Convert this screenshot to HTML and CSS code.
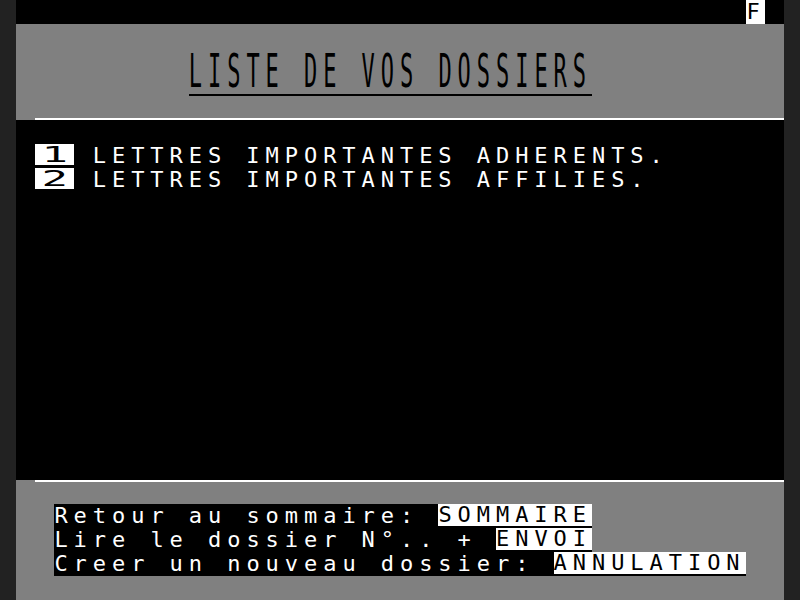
FILE: index.html
```html
<!DOCTYPE html>
<html lang="fr">
<head>
<meta charset="utf-8">
<title>Liste de vos dossiers</title>
<link rel="stylesheet" href="styles.css">
</head>
<body>
<div class="screen">
  <div class="status"><span class="status-f">F</span></div>
  <div class="header">
    <div class="title"><div class="title-text">LISTE DE VOS DOSSIERS</div></div>
    <div class="rule"></div>
  </div>
  <div class="main">
    <div class="item"><span class="num"><span class="num-glyph">1</span></span><span class="txt"> LETTRES IMPORTANTES ADHERENTS.</span></div>
    <div class="item"><span class="num"><span class="num-glyph">2</span></span><span class="txt"> LETTRES IMPORTANTES AFFILIES.</span></div>
  </div>
  <div class="footer">
    <div class="rule rule-top"></div>
    <div class="cmds">
      <div class="cmd"><span class="txt">Retour au sommaire: </span><span class="inv">SOMMAIRE</span></div>
      <div class="cmd"><span class="txt">Lire le dossier N°.. + </span><span class="inv">ENVOI</span></div>
      <div class="cmd"><span class="txt">Creer un nouveau dossier: </span><span class="inv">ANNULATION</span></div>
    </div>
  </div>
</div>
</body>
</html>
```
FILE: styles.css
```css
html, body {
  margin: 0;
  padding: 0;
  background: #222222;
}

.screen {
  width: 768px;
  height: 600px;
  margin-left: 16px;
  display: flex;
  flex-direction: column;
  font-family: "DejaVu Sans Mono", "Liberation Mono", monospace;
  font-size: 22px;
  line-height: 24px;
  letter-spacing: 5.954px;
}

.txt, .inv, .title-text, .num-glyph, .status-f {
  white-space: pre;
}

.status {
  height: 24px;
  background: #000;
  display: flex;
  padding-left: 729.6px;
}

.status-f {
  display: block;
  width: 19.2px;
  height: 24px;
  background: #fff;
  color: #000;
  letter-spacing: 0;
  text-indent: 1px;
}

.header {
  height: 96px;
  box-sizing: border-box;
  padding-top: 24px;
  background: #808080;
}

.title {
  width: 403.2px;
  height: 48px;
  margin-left: 172.8px;
  box-sizing: border-box;
  border-bottom: 2px solid #000;
  color: #000;
}

.title-text {
  transform: scaleY(2.06);
  transform-origin: 0 0;
}

.rule {
  height: 2px;
  margin: 22px 0 0 19.2px;
  background: #fff;
}

.main {
  height: 360px;
  box-sizing: border-box;
  padding-top: 24px;
  background: #000;
  color: #fff;
}

.item {
  display: flex;
  height: 24px;
  padding-left: 19.2px;
}

.num {
  display: block;
  width: 38.4px;
  height: 21px;
  background: #fff;
  color: #000;
  letter-spacing: 0;
  line-height: 22px;
  text-align: center;
}

.num-glyph {
  display: inline-block;
  transform: scaleX(2);
  transform-origin: 50% 50%;
}

.footer {
  height: 120px;
  background: #808080;
}

.rule-top {
  margin-top: 0;
}

.cmds {
  margin-top: 22px;
  padding-left: 38.4px;
  display: flex;
  flex-direction: column;
  align-items: flex-start;
}

.cmd {
  display: flex;
  align-items: flex-start;
  height: 24px;
  background: #000;
  color: #fff;
}

.inv {
  display: block;
  height: 21.5px;
  line-height: 22px;
  background: #fff;
  color: #000;
}
```
